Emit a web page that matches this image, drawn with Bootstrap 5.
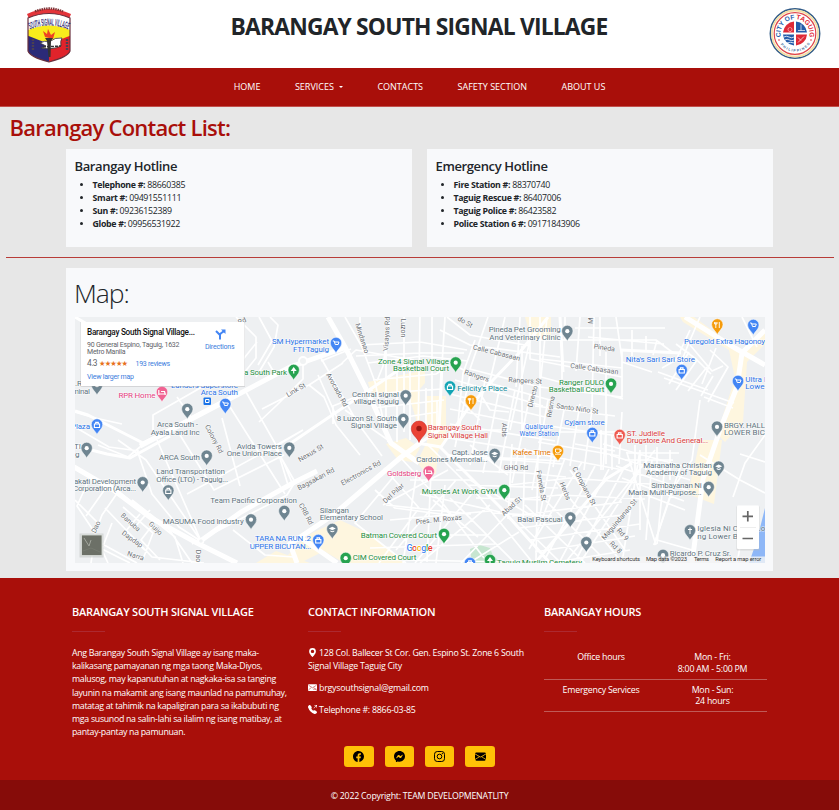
<!DOCTYPE html>
<html lang="en">
<head>
<meta charset="utf-8">
<meta name="viewport" content="width=device-width, initial-scale=1">
<title>Barangay South Signal Village</title>
<link href="https://cdn.jsdelivr.net/npm/bootstrap@5.3.0/dist/css/bootstrap.min.css" rel="stylesheet">
<style>
html{font-size:8.8px}
body{font-family:"Open Sans","Noto Sans",sans-serif;font-size:8.8px;background:#e7e7e7;letter-spacing:-.026em;overflow-x:hidden}
.site-head{height:68px;padding:7px 18px 0 26px}
.site-title{font-size:22.8px;font-weight:700;margin:5px 0 0 -3px;line-height:30px;letter-spacing:-.8px}
.site-nav{height:39px;background:#a90f0a;border-bottom:1px solid #c2504c}
.site-nav .nav-link{color:#fff;padding:0;font-size:9px;line-height:38px;letter-spacing:0}
.site-nav .nav{gap:34.5px}
.site-nav .dropdown-toggle::after{margin-left:5px}
.page-title{color:#a90f0a;font-size:22px;font-weight:600;line-height:26px;padding:7px 0 0 9.5px;letter-spacing:-.77px;height:42px}
.wrap{width:707px;margin-left:66px}
.panel{background:#f8f9fb;padding:9px 8.5px}
.hot{width:346px;height:98px}
.hot h5{font-size:13px;font-weight:600;line-height:16px;margin-bottom:4.5px;letter-spacing:-.37px}
.hot ul{padding-left:18px;line-height:13.2px;letter-spacing:-.3px}
.rule{height:1px;background:#b83c38;margin:10px 5px 10px 6px}
.map-title{font-size:26.5px;font-weight:300;line-height:32px;margin:0 0 8px -1px;letter-spacing:-1.1px}
.map-panel{height:303px;padding:9px 8.5px 0 9px}
.foot{background:#a90f0a;margin-top:7px;height:202px;color:#fff;padding:26.5px 72px 0}
.foot-col{width:236px;padding-right:12px}
.foot h6{font-size:11px;font-weight:600;line-height:14px;letter-spacing:-.22px;margin:0}
.bar-line{width:33px;height:1.5px;background:#ad2930;margin:12px 0 15px}
.foot p{line-height:13.2px;margin-bottom:8.6px;white-space:nowrap}
.foot .about{letter-spacing:-.3px}
.hours td{background:none;color:#fff;border-bottom:1.5px solid #bf5a57;padding:5px 0 3px;line-height:11.8px;text-align:center;vertical-align:top}
.soc{width:29.5px;height:20.7px;padding:0;border-radius:3.3px;background:#ffc107;border:0}
.socials{gap:10.9px;height:21px}
.foot-cols{height:141.500px}
.copy{background:#860c09;height:30px;line-height:32px;color:#fff}
.ico{width:9px;height:9px;vertical-align:-1px}
.lbl{font-family:Roboto,sans-serif;font-size:8px;letter-spacing:0;paint-order:stroke;stroke:#fff;stroke-width:1.2px;stroke-opacity:.7}
.st{font-family:Roboto,sans-serif;font-size:7px;fill:#6b7075;letter-spacing:0;text-anchor:middle;paint-order:stroke;stroke:#fff;stroke-width:1px}
.plain{font-family:Roboto,sans-serif;letter-spacing:0}
.sm-lbl{font-size:6.5px}
.gy{fill:#5f7480}.gn{fill:#1e8e3e}.bl{fill:#2b73e8}.pk{fill:#e5407f}.rd{fill:#d93c3c}.tl{fill:#108a99}.og{fill:#e37400}
</style>
<script src="https://cdn.jsdelivr.net/npm/bootstrap@5.3.0/dist/js/bootstrap.bundle.min.js"></script>
</head>
<body>
<header class="site-head bg-white d-flex justify-content-between align-items-start">
<svg width="46" height="56" viewBox="0 0 46 56">
<defs><clipPath id="sh"><path d="M2 11Q23 2 44 11V44Q42 50 23 55Q4 50 2 44Z"/></clipPath></defs>
<path d="M1 7Q22-3 45 7L43 12Q23 4 3 12Z" fill="#e3343a"/>
<path d="M9 4.5Q23-1.500 37 4.500" fill="none" stroke="#7b3033" stroke-width="2.300" stroke-dasharray="1.500 .8"/>
<g clip-path="url(#sh)"><path d="M0 0H46V56H0Z" fill="#fff"/><path d="M0 24Q23 13 46 24V34H0Z" fill="#f8ec1c"/><path d="M0 28L23 37V56H0Z" fill="#2b2a78"/><path d="M46 28L23 37V56H46Z" fill="#e0232b"/><path d="M7 32v12M41 32v12" stroke="#4b4150" stroke-width="2.400" stroke-dasharray="2 1"/></g>
<path d="M2 11Q23 2 44 11V44Q42 50 23 55Q4 50 2 44Z" fill="none" stroke="#68303e" stroke-width="1.200"/>
<path d="M19 30l-2-6 4 3 1-5 3 6 4-3-2 7Z" fill="#ee4323"/>
<path d="M14 36q5-3 9-1 6-5 13-4-2 3-1 8-8 4-20 2l5-2Z" fill="#fff" stroke="#333" stroke-width=".8"/><path d="M19 31h8l-2 3-.5 16h-2L21 34Z" fill="#333"/><path d="M17 40l18-1" stroke="#333" stroke-width="1.500" stroke-dasharray="3 1"/>
<path id="arcL" d="M4 22.500Q23 14.500 42 22.500" fill="none"/><text font-family="Liberation Sans" font-weight="700" font-size="10" fill="#302c73" letter-spacing="0"><textPath href="#arcL" textLength="39" lengthAdjust="spacingAndGlyphs">SOUTH SIGNAL VILLAGE</textPath></text>
</svg>
<h1 class="site-title">BARANGAY SOUTH SIGNAL VILLAGE</h1>
<svg width="52" height="53" viewBox="-26 -26.500 52 53">
<circle r="24.700" fill="#fff" stroke="#315b88" stroke-width="1.500"/><circle r="23" fill="none" stroke="#f3dfa6" stroke-width="1.800"/><circle r="20.800" fill="#fff" stroke="#df4548" stroke-width="1.200"/>
<path d="M-1-1H-12A12 12 0 0 1-1-12Z" fill="#df2936"/><path d="M1-1V-12A12 12 0 0 1 12-1Z" fill="#245caa"/><path d="M-1 1V12A12 12 0 0 1-12 1Z" fill="#245caa"/><path d="M1 1H12A12 12 0 0 1 1 12Z" fill="#df2936"/>
<path d="M-11 3.500q2.500-1.500 5 0t5 0M-10 6.500q2-1.500 4.500 0t4.500 0M-8 9.500q3-1.500 7 0" stroke="#fff" fill="none" stroke-width=".8"/><circle cx="-5" cy="-4" r="2" fill="none" stroke="#fff" stroke-width=".8" stroke-dasharray="1 .6"/><path d="M3-3h7M6-9v6M3 9l6-6M3 4l3 3" stroke="#fff" stroke-width=".7"/>
<path id="c1" d="M-14.100 3.500A14.500 14.500 0 1 1 14.100 3.500" fill="none"/><text font-family="Liberation Sans" font-weight="700" font-size="6.600" fill="#245caa" letter-spacing="0"><textPath href="#c1" textLength="52">CITY OF <tspan fill="#df2936">TAGUIG</tspan></textPath></text>
<path id="c2" d="M-14.500 11A18.200 18.200 0 0 0 14.500 11" fill="none"/><text font-family="Liberation Sans" font-weight="700" font-size="3.600" fill="#47719f" letter-spacing="0"><textPath href="#c2" textLength="34">PHILIPPINES</textPath></text>
<circle cx="-16" cy="6.500" r=".8" fill="#df2936"/><circle cx="16" cy="6.500" r=".8" fill="#df2936"/>
</svg>
</header>
<nav class="site-nav d-flex justify-content-center">
<ul class="nav flex-nowrap">
<li class="nav-item"><a class="nav-link" href="#">HOME</a></li>
<li class="nav-item"><a class="nav-link dropdown-toggle" href="#">SERVICES</a></li>
<li class="nav-item"><a class="nav-link" href="#">CONTACTS</a></li>
<li class="nav-item"><a class="nav-link" href="#">SAFETY SECTION</a></li>
<li class="nav-item"><a class="nav-link" href="#">ABOUT US</a></li>
</ul>
</nav>
<main>
<h2 class="page-title m-0">Barangay Contact List:</h2>
<div class="wrap d-flex justify-content-between">
<section class="panel hot"><h5>Barangay Hotline</h5>
<ul class="m-0"><li><b>Telephone #:</b> 88660385</li><li><b>Smart #:</b> 09491551111</li><li><b>Sun #:</b> 09236152389</li><li><b>Globe #:</b> 09956531922</li></ul></section>
<section class="panel hot"><h5>Emergency Hotline</h5>
<ul class="m-0"><li><b>Fire Station #:</b> 88370740</li><li><b>Taguig Rescue #:</b> 86407006</li><li><b>Taguig Police #:</b> 86423582</li><li><b>Police Station 6 #:</b> 09171843906</li></ul></section>
</div>
<div class="rule"></div>
<section class="wrap panel map-panel">
<h1 class="map-title">Map:</h1>
<svg class="d-block" width="690" height="246" viewBox="75 317 690 246">
<defs>
<g id="p"><path d="M0 9.200C-.8 6-5.700 3.500-5.700-1A5.700 5.700 0 0 1 5.700-1C5.700 3.500.8 6 0 9.200Z" stroke="#fff" stroke-width=".5"/></g>
<g id="dot"><use href="#p"/><circle cy="-.8" r="2.100" fill="#fff"/></g>
<g id="cart"><use href="#p"/><path d="M-3.200-3h1.400l1 3.500h3l.8-2.500h-4.500M-.8 2h.1M2 2h.1" fill="none" stroke="#fff" stroke-width="1"/></g>
<g id="bag"><use href="#p"/><path d="M-2.600-1.500h5.200v3.500h-5.200ZM-1.300-1.500v-1.600h2.600v1.600" fill="none" stroke="#fff" stroke-width="1.100"/></g>
<g id="bed"><use href="#p"/><path d="M-3.200-3v5M-3.200 1h6.400v1M-1-1.500h3.500l.7 2.500" fill="none" stroke="#fff" stroke-width="1.200"/></g>
<g id="fork"><use href="#p"/><path d="M-1.500-3.500V2.500M-2.700-3.500v2h2.400v-2M2-3.500V2.500" fill="none" stroke="#fff" stroke-width=".9"/></g>
<g id="cap"><use href="#p"/><path d="M-3.500-1.500L0-3.200 3.500-1.500 0 .2ZM-2 .4V1.600Q0 3 2 1.600V.4L0 1.200Z" fill="#fff"/></g>
<g id="tree"><use href="#p"/><path d="M0-4L3 0H-3ZM-.6 0h1.200v2.500h-1.200Z" fill="#fff"/></g>
<g id="cup"><use href="#p"/><path d="M-2.500-3H2V0Q0 2-2.500 0ZM2-2.200H3.200V-.6H2M-3 2.200H3" fill="none" stroke="#fff" stroke-width=".9"/></g>
</defs>
<path d="M75 317h690v246H75z" fill="#eef0f2"/>
<g fill="#fef6df"><path d="M368 382l57-12v13l-5 6v55l-15 8-20 10 34-17-3-26-8-26-35 1-4-8Z"/><path d="M426 396h20v40l-8 16-2 22h-10l-9-12 10-20Z"/><path d="M386 444l20-6 14 10-8 14-14-2Z"/><path d="M340 520l30 14 34 29h-60l-20-12-24 12h-20l28-28Z"/><path d="M680 317h14l48 35 23-22v14l-18 18-4 60-18 20-8-8 18-56-6-28-46-28Z"/><path d="M700 440h22l-8 64-26-10Z"/><path d="M525 317h26v22h-20ZM256 563l20-12 34 12Z"/></g>
<path d="M470 549l10-4 10 3 3 8 9 7h-30Z" fill="#c7e6d0"/><path d="M765 508l-8 32-8 23h16Z" fill="#8eb7f7"/>
<g fill="none" stroke="#fff" stroke-width="1.700" stroke-linejoin="round">
<path d="M236 317l20 20v21l-16 20M259 317l13 24-14 24M270 317l8 8-4 22-18 30M75 412l20 6 27 6M153 435v-20l84-48 20-25M177 397l14 20 34-18M246 392l30 53 12 40M262 409l47-24 34-22M276 445l17 40M225 399l60 95M276 376l-8-14M303 363v16l-26 26-18 17M75 427l34 20 30 4M98 445l30 12 12-10 20-12M137 450l15 44 27 33 20 13M118 440l28 20 55 81M187 494l26-14 60-33 30-17M157 440l44 101M180 435l34 55 70-35M222 418l18 68M275 447l20 35-8 13-95 49M303 430l-35 21M233 530l32 25 29 2"/>
<path d="M75 500l22 22-6 41M87 484l-10 22 16 24 15 33M110 482l-24 34M105 480l24 20 46 37 8 26M118 492l-16 23-12 32M105 508l47 49 52 6M123 507l30 26-10 26M132 500l36 28 24 35M95 540l42 23M140 514l-15 18 20 18M155 522l-14 18 19 20M150 510l-15 17M112 523l-10 26 28 14"/>
<path d="M345 317l17 30 13 35 13 60M360 317v20M390 317l-7 49-6 15M404 317v115M420 317l-2 117M360 345l60-3 47 8M356 356l64-3h44M368 363l55-7 45 5M373 380l63-6 14-9M370 394l72-5M374 408l70-8M380 421l58-9M321 358l36 64 25 34M309 385l15 12 12 28 24 30M333 424v-18l40-16M342 363l14-13 58 10M432 317v120M445 317l-3 48M386 335v95M397 370v72M410 360v80M426 388v44M437 400v33M345 410l43 30M338 420l-20-45M321 361l30-12"/>
<path d="M440 330l30 15 90 12M447 317l23 18 60 11M475 340l-12 33-7 70M488 317l-18 52 70 18M505 317l-16 68M520 317l-4 70M530 340l-20 90M540 317v140M460 368l25 14 65 18M455 380l88 26M450 394l95 23M450 409l100 20M450 424l105 17M448 438l110 17M448 455l112 6M470 375l-15 72M485 380l-15 85M500 385l-17 88M515 390l-16 83M530 395l-18 88M548 400l-16 90M460 400l20 20M465 430h40M475 385l15 25 19 2M522 346v85M470 445l38 30"/>
<path d="M530 317v42l92 18M547 317l-6 60 82 22M562 344v35M580 317l-4 54M594 317l-2 90M622 350v47l-82-10M606 352v112M536 340h120l16 12M565 317v22M575 328h90M588 337l76 7M600 317v39M616 317l6 42M632 330v26M646 336v16M657 340l-4 15M540 359l82 9M622 362l30 10M535 406l80 10M536 424l82 12M538 442l82 14M565 405l-12 62M580 404l-10 62M592 410l-8 60M607 414l-4 56M622 412l-3 52M533 453l90 17"/>
<path d="M700 317l-12 28-11 28M690 330l-14 30-14 8M676 344l20 15 15 15M689 352l-20 32M697 360l-21 30M707 367l-19 24M713 376l-12 20M664 378l70 25M658 372l50 18M690 345l22 26 11-5M716 348l-14 36M710 350l18 17-20 35M704 397l29 11M742 317l15 30M765 435l-20 28-12 34M700 455l40 25 25 13M740 454l25 8M745 520l-8 43"/>
<path d="M400 457l44 48 40 53M427 444l50 50 56 69M384 468l35 40-40 55M395 475l-40 48 51 40M417 470l-14 93M431 472l-4 90M445 485l-9 78M386 505l85 9M390 520l100-9M378 535h110M370 548l125-4M360 559l145 3M410 480h60l64 37M420 494l80 18M448 470l-65 35M456 480l-60 70M475 490l-60 73M490 505l-70 58M506 516l-45 47M519 532l-50 31M447 457l65 3 50 4M456 470l70 3 40 4M468 485l90 3M476 498l70 2M492 513l60 3M375 490l20 18 60 8M433 500l45 37M450 498l65 65"/>
<path d="M512 444l-4 75M525 448l-2 75M538 450l-2 110M552 453l-13 67M565 458l-30 80M582 462l-53 87M595 466l-50 93M609 469l-50 94M624 468l-47 90M640 470l-60 93M655 450l-90 113M640 450l-18 113M626 450l30 95M603 444l90 25M610 455l80 25M616 466l73 25M622 478l62 23M631 489l54 21M640 450v80M652 460l-6 80M665 464l-8 80M680 468l-26 77M510 485l60-7 80 6M510 500l50-5 85 4M512 516l110-14M520 528l110-14M530 540l110-16M535 552l100-16M550 563l80-13M570 470l55 80M555 480l65 80M545 500l60 60M525 505l60 58M517 520l44 43"/>
<path d="M560 432h66M575 444l40 7M601 430v40M612 435v35M635 445v30M646 445v25M657 447v30M670 450v30M627 453h52M625 460h48M700 400l-8 60-20 30-18 55M657 540l35 10"/>
</g>
<g fill="none" stroke="#fff" stroke-width="3" stroke-linejoin="round"><path d="M75 317l17 10M75 446l32 8 23 4 40-22M226 400l-83 43-55-28-13-4M288 445l118-80M548 317l-28 35-27 28-26 30-26 37-24-4M442 365l-3 65-19 13M440 447l60 60 50 56M621 350l60 3M632 463l-26 16-71 84M560 317l3 55"/></g>
<g fill="none" stroke="#fff" stroke-width="5"><path d="M328 317l17 30 24 48 22 48 28 20M140 446l80-42 70-37 54-19M74 467l38 22 39 29 46 25 40 20M199 542l42-30 52-29 24-12M297 563l-7-19 43-29 67-57 20-15M300 537l37 26M765 330l-23 23-5 34-16 40-18 52-11 84M685 317l50 31 30 17"/></g>
<circle cx="303" cy="361" r="4" fill="#f0f2f3" stroke="#fff" stroke-width="2"/><circle cx="201" cy="541" r="2.500" fill="#f0f2f3" stroke="#fff" stroke-width="1.500"/>
<g class="st">
<text transform="translate(243 323)rotate(-25)">Rd</text><text transform="translate(297 392)rotate(-30)">Link St</text><text transform="translate(212 440)rotate(62)">Colony Rd</text><text transform="translate(360 339)rotate(72)">Mindanao</text><text transform="translate(389 334)rotate(-87)">Visayas Rd</text><text transform="translate(401 328)rotate(90)">Luzon</text><text transform="translate(335 391)rotate(61)">Avocado Rd</text><text transform="translate(464 324)rotate(30)">do St</text><text transform="translate(496 355)rotate(14)">Calle Cabasaan</text><text transform="translate(476 378)rotate(18)">Rangers</text><text transform="translate(525 383)rotate(3)">Rangers St</text><text transform="translate(535 397)rotate(-75)">Directo</text><text transform="translate(502 430)rotate(90)">Abis</text><text transform="translate(604 350)rotate(8)">Pineda</text><text transform="translate(594 371)rotate(8)">Calle Cabasaan</text><text transform="translate(577 411)rotate(8)">Santo Niño St</text><text transform="translate(553 407)rotate(-80)">Resma</text><text transform="translate(593 321)rotate(-85)">M</text>
<text transform="translate(129 524)rotate(42)">Banuba</text><text transform="translate(154 530)rotate(45)">Guijo</text><text transform="translate(131 541)rotate(35)">Dapdap</text><text transform="translate(135 558)rotate(18)">Narra</text><text transform="translate(98 528)rotate(-65)">Dao</text><text transform="translate(196 556)rotate(90)">Dao</text><text transform="translate(312 455)rotate(-31)">Nexus St</text><text transform="translate(317 481)rotate(-28)">Bagsakan Rd</text><text transform="translate(362 475)rotate(-29)">Electronics Rd</text><text transform="translate(395 495)rotate(-43)">Del Pilar</text><text transform="translate(304 515)rotate(62)">CRB Rd</text><text x="516" y="470">GHQ Rd</text><text transform="translate(513 508)rotate(-42)">Abad St</text><text transform="translate(439 522)rotate(-6)">Pres. M. Roxas</text><text transform="translate(539 486)rotate(80)">Famela St</text><text transform="translate(563 492)rotate(68)">Herbs</text><text transform="translate(582 487)rotate(62)">C Oropiana St</text><text transform="translate(621 521)rotate(-50)">Maguindanao St</text><text transform="translate(621 536)rotate(48)">Rd 9</text><text transform="translate(614 549)rotate(45)">Rd 8</text>
</g>
<g class="lbl gn"><text x="244" y="374.500" textLength="43">a South Park</text><text x="378" y="363.700" textLength="71">Zone 4 Signal Village</text><text x="393" y="371.300" textLength="56">Basketball Court</text><text x="559" y="384.700" textLength="45">Ranger DULO</text><text x="548.700" y="392.300" textLength="55.600">Basketball Court</text><text x="421.700" y="494.300" textLength="75.600">Muscles At Work GYM</text><text x="360.700" y="537.700" textLength="76.300">Batman Covered Court</text><text x="352.700" y="559.500" textLength="63.600">CIM Covered Court</text><text x="497" y="565" textLength="85">Taguig Muslim Cemetery</text></g>
<g class="lbl bl"><text x="272" y="343.700" textLength="57">SM Hypermarket</text><text x="293" y="351.500" textLength="36">FTI Taguig</text><text x="171" y="387.500" textLength="67">Landers Superstore</text><text x="200.700" y="395.300" textLength="37.300">Arca South</text><text x="71" y="429" textLength="19">Plaza</text><text class="sm-lbl" x="525" y="429" textLength="28">Qualipure</text><text class="sm-lbl" x="519.500" y="436" textLength="39">Water Station</text><text x="564.300" y="424.700" textLength="40.400">Cyjam store</text><text x="625.700" y="361.700" textLength="69.300">Nita's Sari Sari Store</text><text x="684" y="343.500" textLength="81">Puregold Extra Hagonoy</text><text x="745.300" y="381.700">Ultra L</text><text x="745.300" y="389.300">Lower</text><text x="255" y="541" textLength="56">TARA NA RUN .2</text><text x="249.700" y="548.700" textLength="61.500">UPPER BICUTAN...</text></g>
<g class="lbl gy"><text x="75" y="386">.R</text><text x="72" y="393.500" textLength="18">minal</text><text x="157" y="426.700" textLength="41">Arca South -</text><text x="150.700" y="434.500" textLength="49">Ayala Land Inc</text><text x="352" y="396.500" textLength="47">Central signal</text><text x="353.700" y="404" textLength="45.300">village taguig</text><text x="336.700" y="420.500" textLength="60.300">8 Luzon St. South</text><text x="350.700" y="428" textLength="46.300">Signal Village</text><text x="488.700" y="332" textLength="72">Pineda Pet Grooming</text><text x="489.300" y="339.700" textLength="71.400">And Veterinary Clinic</text><text x="724" y="427.700" textLength="41">BRGY. HALL</text><text x="724" y="435.300" textLength="41">LOWER BIC</text>
<text x="74" y="449.300">TI</text><text x="75" y="457.300">g</text><text x="159" y="460.300" textLength="41">ARCA South</text><text x="236.700" y="449" textLength="45.300">Avida Towers</text><text x="226.700" y="456.300" textLength="55.300">One Union Place</text><text x="156.300" y="474.300" textLength="68.700">Land Transportation</text><text x="156.300" y="482" textLength="71.700">Office (LTO) - Taguig...</text><text x="74" y="483.500" textLength="62">akati Development</text><text x="73" y="491" textLength="63">Corporation (Arca...</text><text x="210.300" y="502.700" textLength="86.700">Team Pacific Corporation</text><text x="162.700" y="524" textLength="81">MASUMA Food Industry</text><text x="319.700" y="512.700" textLength="29.300">Silangan</text><text x="319.700" y="520.300" textLength="63.300">Elementary School</text><text x="451.700" y="454.700" textLength="36">Capt. Jose</text><text x="416.300" y="462.300" textLength="71.400">Cardones Memorial...</text><text x="517.300" y="521.700" textLength="45.400">Balai Pascual</text><text x="643.300" y="467.700" textLength="68.700">Maranatha Christian</text><text x="646" y="475.300" textLength="66">Academy of Taguig</text><text x="651.300" y="487.700" textLength="50.400">Simbayanan Ni</text><text x="628.300" y="495.300" textLength="73.400">Maria Multi-Purpose...</text><text x="697.300" y="531" textLength="68">Iglesia Ni Cristo Lo</text><text x="697.300" y="538.700" textLength="54">ng Lower Bicut</text><text x="669.700" y="556" textLength="61.300">Ricardo P. Cruz Sr.</text></g>
<g class="lbl"><text class="pk" x="118.500" y="397.500" textLength="37">RPR Home</text><text class="pk" x="387" y="476" textLength="34.300">Goldsberg</text><text class="tl" x="457.300" y="391" textLength="50">Felicity's Place</text><text class="rd" x="427.700" y="430" textLength="53.600">Barangay South</text><text class="rd" x="427.700" y="437.700" textLength="60.300">Signal Village Hall</text><text class="rd" x="626.700" y="435.700" textLength="38.300">ST. Judielle</text><text class="rd" x="626.700" y="443.300" textLength="81.300">Drugstore And General...</text><text class="og" x="512.700" y="455" textLength="38">Kafee Time</text></g>
<g fill="#6f8591"><use href="#dot" x="97" y="386"/><use href="#dot" x="187.300" y="410"/><use href="#dot" x="405.700" y="396.500"/><use href="#dot" x="403.300" y="420"/><use href="#dot" x="567.300" y="332"/><use href="#dot" x="717" y="427.700"/><use href="#dot" x="86.700" y="449"/><use href="#dot" x="206.700" y="456.700"/><use href="#dot" x="289.300" y="448.700"/><use href="#bag" x="168.300" y="491.500"/><use href="#dot" x="142.700" y="483.300"/><use href="#dot" x="284.300" y="512"/><use href="#dot" x="251" y="520.500"/><use href="#cap" x="332.300" y="530"/><use href="#cap" x="494.700" y="455"/><use href="#dot" x="570.300" y="518.500"/><use href="#cap" x="718.700" y="467.700"/><use href="#dot" x="708.700" y="488"/><use href="#dot" x="586.300" y="543.300"/><use href="#p" x="690" y="531.300"/><path d="M689.500 527.500h1v1.500h1.500v1h-1.500v4h-1v-4H688v-1h1.500z" fill="#fff"/><use href="#dot" x="663" y="556"/></g>
<g fill="#4285f4"><use href="#bag" x="97" y="425.500"/><use href="#cart" x="225.300" y="405"/><use href="#cart" x="336" y="344"/><use href="#bag" x="592.300" y="434"/><use href="#bag" x="681.700" y="371"/><use href="#cart" x="753.300" y="326"/><use href="#cart" x="738" y="382"/><use href="#bag" x="318.300" y="541"/><use href="#bag" x="470" y="564"/><rect x="203.500" y="397.500" width="7.500" height="7.500" rx="1" fill="#1a73e8"/><path d="M205.500 399.500h3.500v3h-3.500z" fill="none" stroke="#fff"/></g>
<g fill="#27a350"><use href="#tree" x="293.700" y="371"/><use href="#dot" x="455.700" y="363.500"/><use href="#dot" x="611" y="384.700"/><use href="#dot" x="504.300" y="491"/><use href="#dot" x="444" y="535"/><use href="#dot" x="345.700" y="559"/><use href="#tree" x="490" y="561"/></g>
<g fill="#f59b0b"><use href="#fork" x="471" y="401.500"/><use href="#fork" x="717.300" y="325.500"/><use href="#cup" x="558" y="452"/></g>
<g fill="#f06292"><use href="#bed" x="162" y="393"/><use href="#bed" x="428.700" y="472.500"/></g><use href="#bag" x="450" y="387.500" fill="#12a4b4"/><use href="#bag" x="619.700" y="436" fill="#ee5a50"/>
<path d="M419 442.500C418 438 411.300 435 411.300 428.700a7.700 7.700 0 0 1 15.400 0C426.700 435 420 438 419 442.500Z" fill="#ea4335" stroke="#c5221f" stroke-width=".5"/><circle cx="419" cy="428.500" r="2.700" fill="#9b1813"/>
<text class="plain" x="406.500" y="551" font-size="9" font-weight="500" textLength="26" stroke="#fff" stroke-width="1.500" paint-order="stroke"><tspan fill="#4285f4">G</tspan><tspan fill="#ea4335">o</tspan><tspan fill="#fbbc04">o</tspan><tspan fill="#4285f4">g</tspan><tspan fill="#34a853">l</tspan><tspan fill="#ea4335">e</tspan></text>
<path d="M590 556.500h175v6.500H590z" fill="#f5f5f5" opacity=".8"/>
<g class="plain" font-size="5.800" fill="#333"><text x="592.300" y="561.300" textLength="47.700">Keyboard shortcuts</text><text x="646" y="561.300" textLength="41">Map data ©2023</text><text x="694" y="561.300" textLength="15">Terms</text><text x="715.300" y="561.300" textLength="46">Report a map error</text></g>
<rect x="79.500" y="533.500" width="24" height="24" fill="#c5c8c6" opacity=".6"/><rect x="81.500" y="535" width="20.500" height="20.500" fill="#6c7067" stroke="#dde0dc" stroke-width=".8"/><path d="M84 538l5 8 2-6" stroke="#a3a79e" fill="none"/><path d="M83 551l8-3 9 4" stroke="#757a70" fill="none"/>
<rect x="736.500" y="506" width="23" height="44.500" rx="1" fill="#bbb" opacity=".4"/><rect x="737" y="505.500" width="22" height="43.500" rx="1" fill="#fff"/><path d="M742.500 516.300h10.500M747.800 511v10.500M742.500 538.500h10.500" stroke="#666" stroke-width="1.700"/><path d="M740 527.500h16" stroke="#e6e6e6" stroke-width=".7"/>
<rect x="80.500" y="322" width="164.500" height="65" fill="#999" opacity=".3"/><path d="M81 322h163.500v64H81z" fill="#fff"/>
<g class="plain" font-size="7.500" fill="#5f6368"><text x="87" y="334.500" font-size="8.200" fill="#111" font-weight="500" textLength="108">Barangay South Signal Village...</text><text x="87" y="346.500" font-size="7" textLength="92.500">90 General Espino, Taguig, 1632</text><text x="87" y="354.300" font-size="7" textLength="38.500">Metro Manila</text><text x="87" y="366" font-size="8.400" textLength="10.500">4.3</text><text x="99" y="366" font-size="7.200" fill="#e7711b" font-family="DejaVu Sans" textLength="29">★★★★★</text><text x="135.500" y="366" font-size="7" fill="#3b7ddd" textLength="34.500">193 reviews</text><text x="87" y="379" font-size="7" fill="#3b7ddd" textLength="47">View larger map</text><text x="205" y="348.700" font-size="7" fill="#3b7ddd" textLength="29.500">Directions</text></g>
<path d="M220 339.500v-4.500q0-1 1-1.800l3-2M220 335l-4-4" fill="none" stroke="#4285f4" stroke-width="2"/><path d="M221 329.500h4.500v4.500Z" fill="#4285f4"/>
</svg>
</section>
</main>
<footer>
<div class="foot">
<div class="foot-cols d-flex">
<div class="foot-col flex-shrink-0"><h6>BARANGAY SOUTH SIGNAL VILLAGE</h6><div class="bar-line"></div>
<p class="about">Ang Barangay South Signal Village ay isang maka-<br>kalikasang pamayanan ng mga taong Maka-Diyos,<br>malusog, may kapanutuhan at nagkaka-isa sa tanging<br>layunin na makamit ang isang maunlad na pamumuhay,<br>matatag at tahimik na kapaligiran para sa ikabubuti ng<br>mga susunod na salin-lahi sa ilalim ng isang matibay, at<br>pantay-pantay na pamunuan.</p></div>
<div class="foot-col flex-shrink-0"><h6>CONTACT INFORMATION</h6><div class="bar-line"></div>
<p><svg class="ico" viewBox="0 0 16 16" fill="#fff"><path d="M8 16s6-5.686 6-10A6 6 0 0 0 2 6c0 4.314 6 10 6 10zm0-7a3 3 0 1 1 0-6 3 3 0 0 1 0 6z"/></svg> 128 Col. Ballecer St Cor. Gen. Espino St. Zone 6 South<br>Signal Village Taguig City</p>
<p><svg class="ico" viewBox="0 0 16 16"><rect y="2" width="16" height="12" rx="1.500" fill="#fff"/><path d="M1 4l7 4.500L15 4M1 12l5-4M10 8l5 4M9 11h6" fill="none" stroke="#b5302c" stroke-width="1"/></svg> brgysouthsignal@gmail.com</p>
<p><svg class="ico" viewBox="0 0 16 16" fill="#fff"><path d="M1.885.511a1.745 1.745 0 0 1 2.610.163L6.290 2.980c.329.423.445.974.315 1.494l-.547 2.190a.678.678 0 0 0 .178.643l2.457 2.457a.678.678 0 0 0 .644.178l2.189-.547a1.745 1.745 0 0 1 1.494.315l2.306 1.794c.829.645.905 1.870.163 2.611l-1.034 1.034c-.740.740-1.846 1.065-2.877.702a18.634 18.634 0 0 1-7.010-4.420 18.634 18.634 0 0 1-4.420-7.009c-.362-1.030-.037-2.137.703-2.877L1.885.511zM11 .5a.5.5 0 0 1 .5-.5h4a.5.5 0 0 1 .5.5v4a.5.500 0 0 1-1 0V1.707l-4.146 4.147a.5.500 0 0 1-.708-.708L14.293 1H11.500a.5.500 0 0 1-.5-.5z"/></svg> Telephone #: 8866-03-85</p></div>
<div class="foot-col flex-shrink-0"><h6>BARANGAY HOURS</h6><div class="bar-line"></div>
<table class="hours" width="223"><tr><td width="114">Office hours</td><td>Mon - Fri:<br>8:00 AM - 5:00 PM</td></tr><tr><td>Emergency Services</td><td>Mon - Sun:<br>24 hours</td></tr></table></div>
</div>
<div class="socials d-flex justify-content-center">
<button class="btn soc d-flex align-items-center justify-content-center" aria-label="Facebook"><svg width="11" height="11" viewBox="0 0 16 16"><path d="M16 8.049c0-4.446-3.582-8.050-8-8.050C3.580 0-.002 3.603-.002 8.050c0 4.017 2.926 7.347 6.750 7.951v-5.625h-2.030V8.050H6.750V6.275c0-2.017 1.195-3.131 3.022-3.131.876 0 1.791.157 1.791.157v1.980h-1.009c-.993 0-1.303.621-1.303 1.258v1.510h2.218l-.354 2.326H9.250V16c3.824-.604 6.750-3.934 6.750-7.951z"/></svg></button>
<button class="btn soc d-flex align-items-center justify-content-center" aria-label="Messenger"><svg width="11" height="11" viewBox="0 0 16 16"><path d="M0 7.760C0 3.301 3.493 0 8 0s8 3.301 8 7.760-3.493 7.760-8 7.760c-.810 0-1.586-.107-2.316-.307a.639.639 0 0 0-.427.030l-1.588.702a.640.640 0 0 1-.898-.566l-.044-1.423a.639.639 0 0 0-.215-.456C.956 12.108 0 10.092 0 7.760zm5.546-1.459-2.350 3.728c-.225.358.214.761.551.506l2.525-1.916a.480.480 0 0 1 .578-.002l1.869 1.402a1.200 1.200 0 0 0 1.735-.320l2.350-3.728c.226-.358-.214-.761-.551-.506L9.728 7.381a.480.480 0 0 1-.578.002L7.281 5.980a1.200 1.200 0 0 0-1.735.320z"/></svg></button>
<button class="btn soc d-flex align-items-center justify-content-center" aria-label="Instagram"><svg width="11" height="11" viewBox="0 0 16 16" fill="none" stroke="#000" stroke-width="1.450"><rect x=".75" y=".75" width="14.500" height="14.500" rx="4"/><circle cx="8" cy="8" r="3.400"/><circle cx="12.200" cy="3.800" r=".95" fill="#000" stroke="none"/></svg></button>
<button class="btn soc d-flex align-items-center justify-content-center" aria-label="Email"><svg width="11" height="11" viewBox="0 0 16 16"><path d="M.050 3.555A2 2 0 0 1 2 2h12a2 2 0 0 1 1.950 1.555L8 8.414.050 3.555ZM0 4.697v7.104l5.803-3.558L0 4.697ZM6.761 8.830l-6.570 4.027A2 2 0 0 0 2 14h12a2 2 0 0 0 1.808-1.144l-6.570-4.027L8 9.586l-1.239-.757Zm3.436-.586L16 11.801V4.697l-5.803 3.546Z"/></svg></button>
</div>
</div>
<div class="copy text-center">© 2022 Copyright: TEAM DEVELOPMENATLITY</div>
</footer>
</body>
</html>
